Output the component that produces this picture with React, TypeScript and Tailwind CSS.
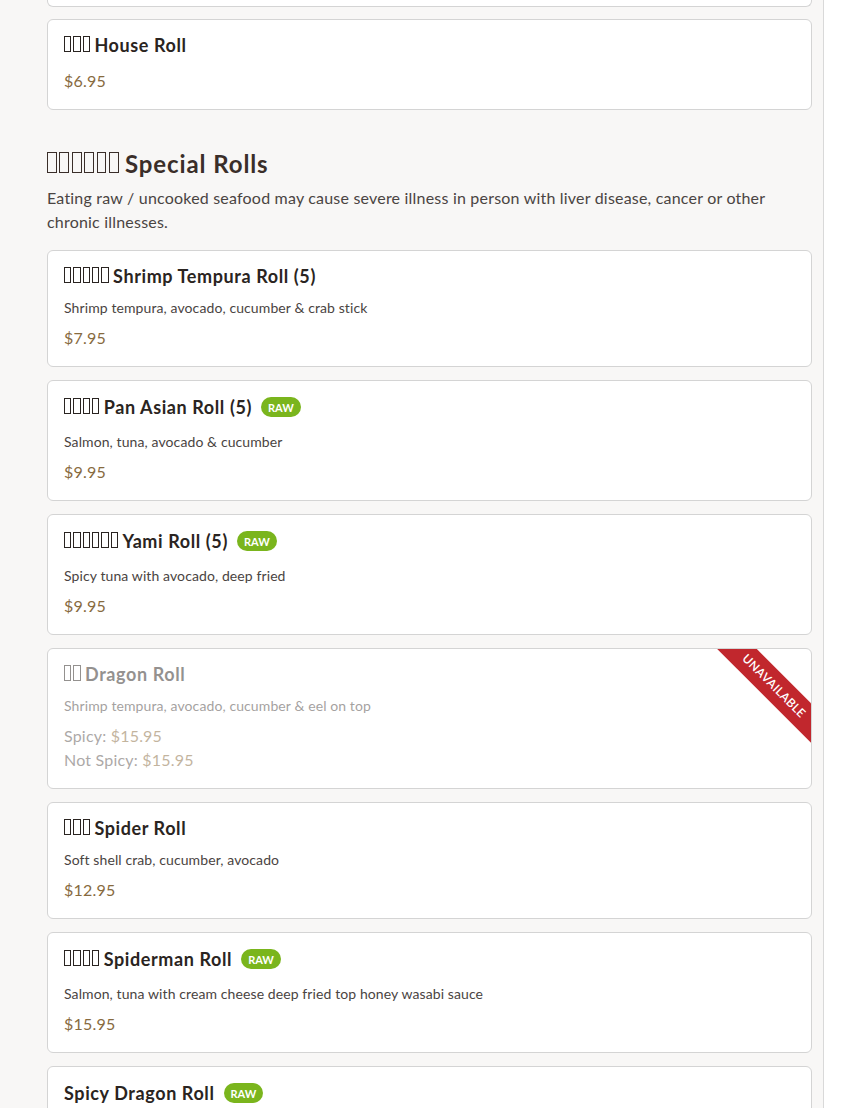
import React from 'react';

type Price = { label?: string; value: string };
type Item = {
  cjk: number;
  name: string;
  desc?: string;
  raw?: boolean;
  unavailable?: boolean;
  prices: Price[];
};

const specialRolls: Item[] = [
  { cjk: 5, name: 'Shrimp Tempura Roll (5)', desc: 'Shrimp tempura, avocado, cucumber & crab stick', prices: [{ value: '$7.95' }] },
  { cjk: 4, name: 'Pan Asian Roll (5)', raw: true, desc: 'Salmon, tuna, avocado & cucumber', prices: [{ value: '$9.95' }] },
  { cjk: 6, name: 'Yami Roll (5)', raw: true, desc: 'Spicy tuna with avocado, deep fried', prices: [{ value: '$9.95' }] },
  {
    cjk: 2,
    name: 'Dragon Roll',
    unavailable: true,
    desc: 'Shrimp tempura, avocado, cucumber & eel on top',
    prices: [
      { label: 'Spicy:', value: '$15.95' },
      { label: 'Not Spicy:', value: '$15.95' },
    ],
  },
  { cjk: 3, name: 'Spider Roll', desc: 'Soft shell crab, cucumber, avocado', prices: [{ value: '$12.95' }] },
  { cjk: 4, name: 'Spiderman Roll', raw: true, desc: 'Salmon, tuna with cream cheese deep fried top honey wasabi sauce', prices: [{ value: '$15.95' }] },
  { cjk: 0, name: 'Spicy Dragon Roll', raw: true, desc: 'Spicy tuna, avocado & cucumber', prices: [{ value: '$15.95' }] },
];

// missing-glyph boxes, the CJK names did not render in the source page
function Tofu({ count }: { count: number }) {
  if (!count) return null;
  return (
    <span aria-hidden="true" className="mr-[0.25em] tracking-normal">
      {Array.from({ length: count }).map((_, i) => (
        <span key={i} className="inline-block w-[0.4em] h-[0.89em] border border-current mr-[0.12em] last:mr-0" />
      ))}
    </span>
  );
}

function RawBadge() {
  return (
    <span className="inline-flex items-center h-5 px-[7px] rounded-full bg-[#7ab51d] text-white text-[11px] font-bold leading-none">
      RAW
    </span>
  );
}

function MenuCard({ item }: { item: Item }) {
  return (
    <div className="relative overflow-hidden rounded-md border border-[#d4d4d4] bg-white p-4">
      <div className={item.unavailable ? 'opacity-50' : ''}>
        <div className={`flex items-center gap-[9px] ${item.raw ? 'pb-[2px]' : ''}`}>
          <h3 className="text-[18px] leading-[18px] font-bold tracking-[0.6px] text-[#2a2421]">
            <Tofu count={item.cjk} />
            {item.name}
          </h3>
          {item.raw && <RawBadge />}
        </div>
        {item.desc && <p className="mt-[13px] text-[14px] leading-5 tracking-[0.1px] text-[#4a4442]">{item.desc}</p>}
        <div className={item.desc ? 'mt-2' : 'mt-[15px]'}>
          {item.prices.map(p => (
            <div key={p.value + (p.label ?? '')} className="text-base leading-6 tracking-[0.2px]">
              {p.label && <span className="text-[#5a5350]">{p.label} </span>}
              <span className="text-[#876a3e]">{p.value}</span>
            </div>
          ))}
        </div>
      </div>
      {item.unavailable && (
        <div className="absolute right-[-33px] top-[23px] w-[140px] h-[28px] rotate-45 bg-[#c1272d] flex items-center justify-center text-white text-[12px] font-semibold tracking-[0.3px]">
          UNAVAILABLE
        </div>
      )}
    </div>
  );
}

export default function App() {
  return (
    <div className="min-h-screen bg-white font-['Lato','Open_Sans',sans-serif]">
      <div className="w-[824px] min-h-screen bg-[#f8f7f6] border-r border-[#d9d9d9] pl-[47px] pr-[11px] pb-10">
        {/* tail of the card above */}
        <div className="h-[7px] rounded-b-md border border-t-0 border-[#d4d4d4] bg-white" />

        <div className="mt-[12px]">
          <MenuCard item={{ cjk: 3, name: 'House Roll', prices: [{ value: '$6.95' }] }} />
        </div>

        <section className="mt-[38px]">
          <h2 className="text-2xl leading-8 font-bold tracking-[0.9px] text-[#3a2e29]">
            <Tofu count={6} />
            Special Rolls
          </h2>
          <p className="mt-[6px] text-base leading-6 tracking-[0.2px] text-[#4a4442]">
            Eating raw / uncooked seafood may cause severe illness in person with liver disease, cancer or other chronic illnesses.
          </p>
          <div className="mt-4 flex flex-col gap-[13px]">
            {specialRolls.map(item => (
              <MenuCard key={item.name} item={item} />
            ))}
          </div>
        </section>
      </div>
    </div>
  );
}
